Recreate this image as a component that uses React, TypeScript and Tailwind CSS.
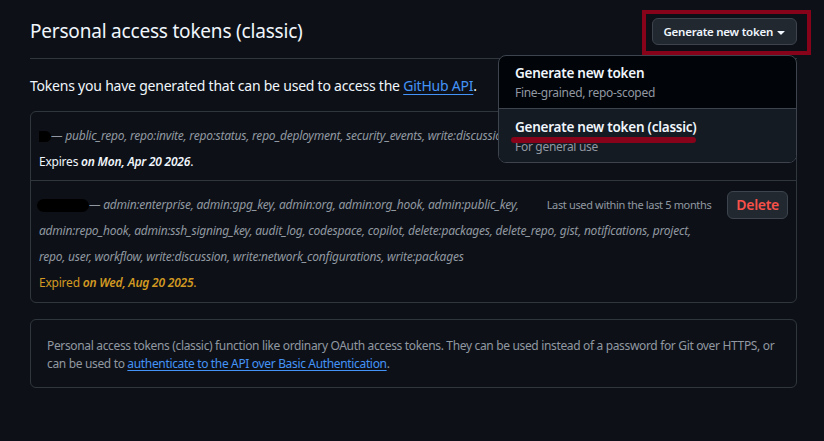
import { useState } from 'react';

const scopesActive =
  'public_repo, repo:invite, repo:status, repo_deployment, security_events, write:discussion';

function Caret() {
  return (
    <svg viewBox="0 0 16 16" width="16" height="16" fill="currentColor">
      <path d="m4.427 7.427 3.396 3.396a.25.25 0 0 0 .354 0l3.396-3.396A.25.25 0 0 0 11.396 7H4.604a.25.25 0 0 0-.177.427Z" />
    </svg>
  );
}

function GenerateMenu() {
  const [open] = useState(true);
  return (
    <div className="relative">
      {/* annotation box drawn around the button */}
      <div className="absolute left-[-10px] top-[-8px] right-[-14px] bottom-[-10px] border-4 border-[#86031a] pointer-events-none" />
      <button className="relative flex items-center h-[27px] pl-[11px] pr-[7px] rounded-[6px] bg-[#212830] border border-[#3d444d] text-[11.5px] tracking-[-0.25px] font-semibold text-[#f0f6fc]">
        Generate new token
        <Caret />
      </button>
      {open && (
        <div className="absolute z-10 right-0 top-[37px] w-[299px] rounded-[8px] border border-[#3d444d] bg-[#010409] overflow-hidden">
          <div className="h-[53px] px-[16px] pt-[7px] border-b border-[#3d444d]">
            <div className="text-[13.5px] tracking-[-0.25px] leading-[20px] font-semibold text-[#f0f6fc]">Generate new token</div>
            <div className="text-[12px] tracking-[-0.3px] leading-[18px] mt-[1px] text-[#9198a1]">Fine-grained, repo-scoped</div>
          </div>
          <div className="relative h-[53px] px-[16px] pt-[8px] bg-[#151b23]">
            <div className="text-[13.5px] tracking-[-0.25px] leading-[20px] font-semibold text-[#f0f6fc]">Generate new token (classic)</div>
            <div className="text-[12px] tracking-[-0.3px] leading-[18px] mt-[1px] text-[#9198a1]">For general use</div>
            <div className="absolute left-[12px] top-[28px] w-[185px] h-[6px] rounded-full bg-[#86031a]" />
          </div>
        </div>
      )}
    </div>
  );
}

export default function App() {
  return (
    <div className="min-h-screen bg-[#0d1117] text-[#f0f6fc] font-['Noto_Sans',sans-serif]">
      <div className="w-[767px] ml-[30px] pt-[18px]">
        <div className="flex items-center justify-between pb-[13px] border-b border-[#30363d]">
          <h2 className="text-[19px] tracking-[-0.2px] leading-[27px] font-normal">Personal access tokens (classic)</h2>
          <GenerateMenu />
        </div>

        <p className="mt-[16px] text-[14px] tracking-[-0.22px] leading-[21px]">
          Tokens you have generated that can be used to access the{' '}
          <a className="text-[#4493f8] underline underline-offset-[3px]">GitHub API</a>.
        </p>

        <div className="mt-[15px] rounded-[6px] border border-[#30363d] text-[12px] tracking-[-0.22px]">
          <div className="px-[8px] pt-[11px] pb-[5px] border-b border-[#30363d]">
            <div className="leading-[26px] whitespace-nowrap overflow-hidden">
              <span className="inline-block align-middle w-[18px] h-[11px] -ml-[6px] rounded-full bg-black" />
              <span className="italic text-[#9198a1]">— {scopesActive}</span>
            </div>
            <div className="leading-[26px]">
              Expires <span className="italic font-semibold">on Mon, Apr 20 2026</span>.
            </div>
          </div>

          <div className="px-[8px] pt-[11px] pb-[6px]">
            <div className="leading-[26px]">
              <button className="float-right -mt-[1px] h-[28px] px-[8px] rounded-[6px] bg-[#212830] border border-[#3d444d] text-[14px] tracking-[-0.3px] font-semibold text-[#f85149]">
                Delete
              </button>
              <span className="float-right mr-[16px] mt-[1px] leading-[24px] text-[11px] tracking-[-0.35px] text-[#9198a1]">
                Last used within the last 5 months
              </span>
              <span className="inline-block align-middle w-[52px] h-[13px] -ml-[2px] rounded-full bg-black" />
              <span className="italic text-[#9198a1]">
                — admin:enterprise, admin:gpg_key, admin:org, admin:org_hook, admin:public_key,
                <br />
                admin:repo_hook, admin:ssh_signing_key, audit_log, codespace, copilot, delete:packages, delete_repo, gist,
                notifications, project,
                <br />
                repo, user, workflow, write:discussion, write:network_configurations, write:packages
              </span>
            </div>
            <div className="leading-[26px] text-[#d29922]">
              Expired <span className="italic font-semibold">on Wed, Aug 20 2025</span>.
            </div>
          </div>
        </div>

        <div className="mt-[16px] rounded-[6px] border border-[#30363d] px-[16px] pt-[17px] pb-[14px] text-[12px] tracking-[-0.34px] leading-[18px] text-[#9198a1]">
          Personal access tokens (classic) function like ordinary OAuth access tokens. They can be used instead of a
          password for Git over HTTPS, or can be used to{' '}
          <a className="text-[#4493f8] underline underline-offset-[2px]">
            authenticate to the API over Basic Authentication
          </a>
          .
        </div>
      </div>
    </div>
  );
}
